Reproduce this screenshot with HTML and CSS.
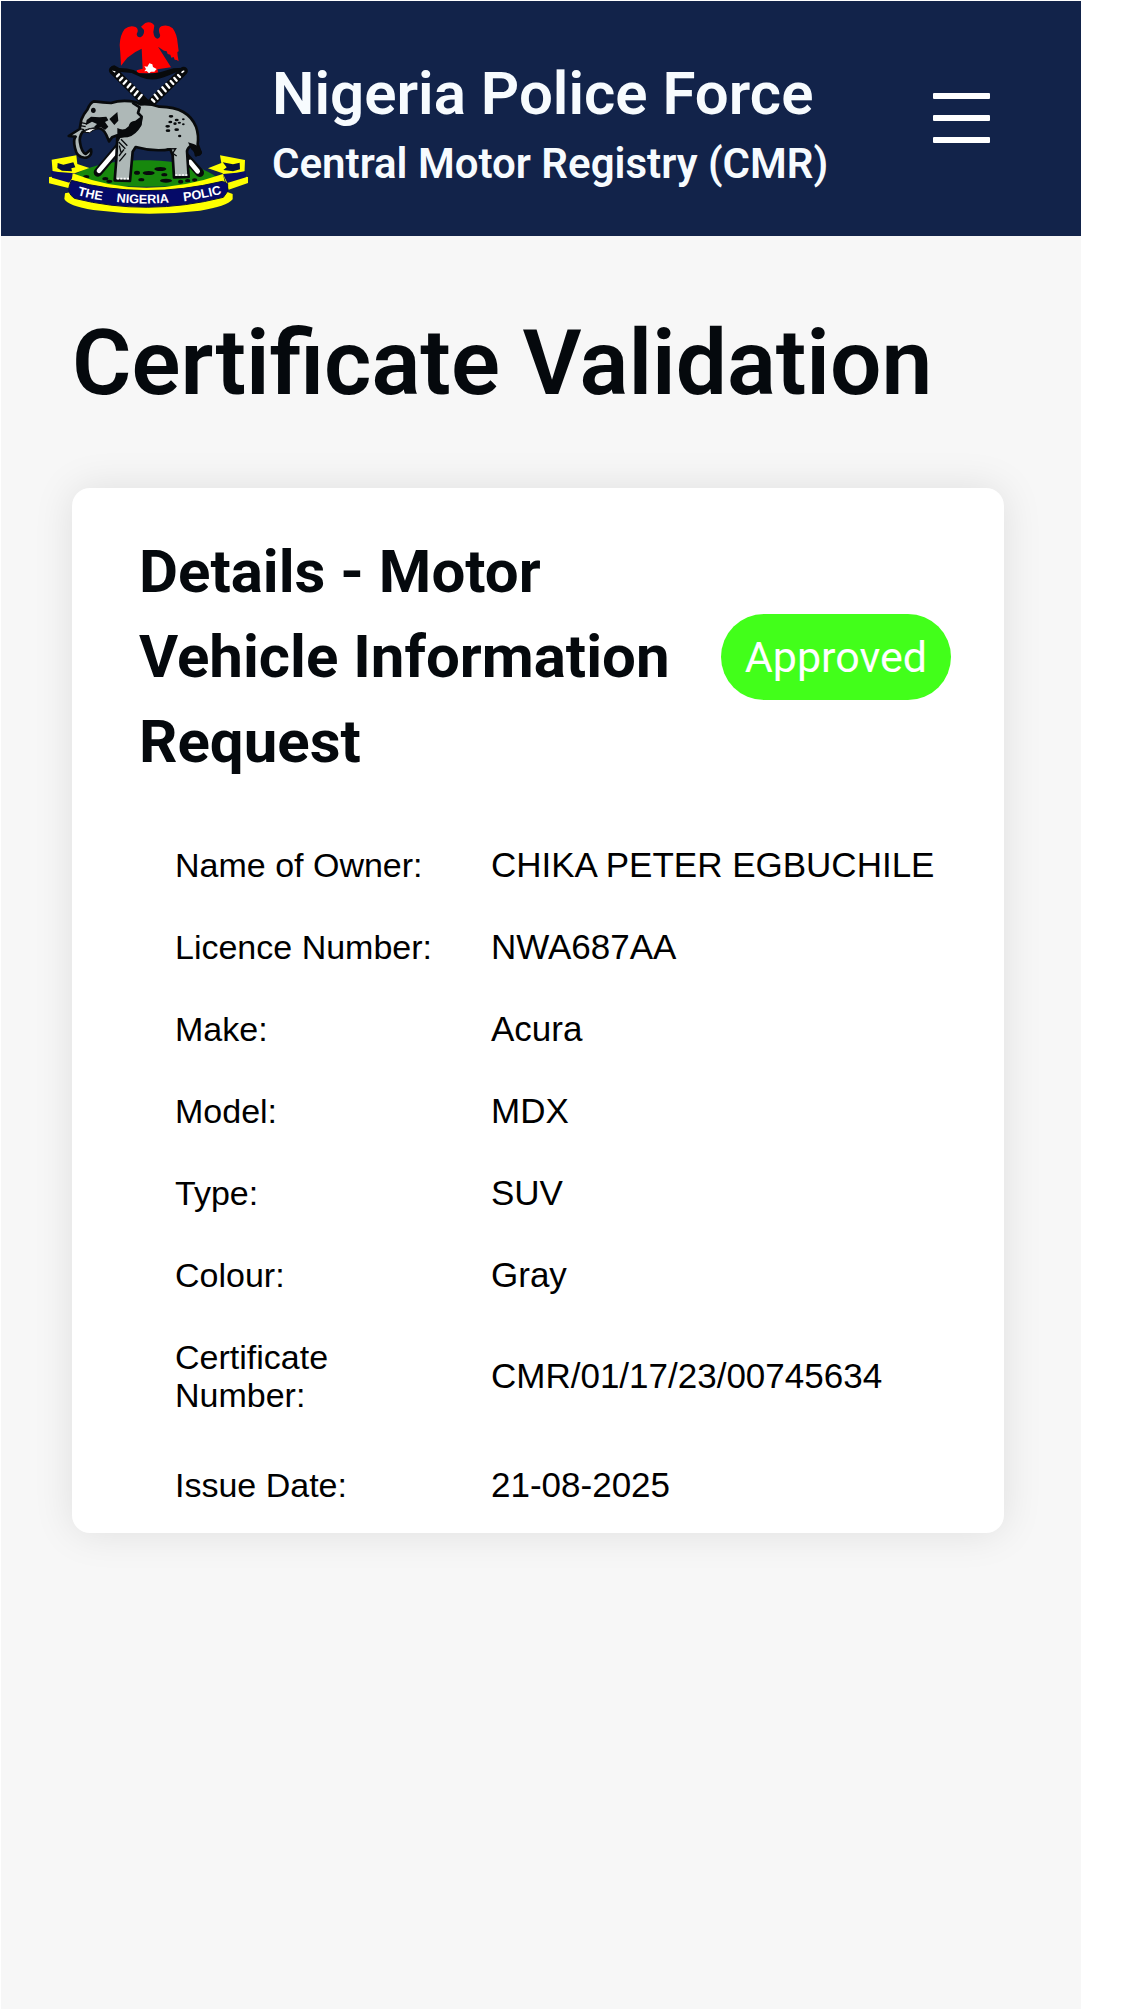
FILE: index.html
```html
<!DOCTYPE html>
<html lang="en">
<head>
  <meta charset="UTF-8">
  <meta name="viewport" content="width=device-width, initial-scale=1.0">
  <title>Certificate Validation</title>
  <link rel="stylesheet" href="styles.css">
</head>
<body>
  <div class="page">
    <header class="navbar">
      <svg class="crest" viewBox="0 0 660 660" role="img" aria-label="Crest">
        <!-- eagle -->
        <path fill="#ff0000" d="M309 45 Q316 36 326 37 Q338 38 343 47 L340 66 Q342 84 352 86 Q365 82 358 68 Q354 54 364 49 Q383 42 398 55 Q411 72 413 100 L416 124 L412 126 L413 138 L416 154 L410 150 L404 149 L401 141 L394 143 L391 134 L383 132 L380 124 L372 122 L354 110 L393 172 L352 178 L355 188 L336 190 L292 190 L290 181 L308 176 L305 116 L286 126 L262 143 L243 167 L241 130 L239 105 Q240 75 254 57 Q270 44 287 51 Q298 58 290 72 Q292 84 303 81 Q314 74 312 60 L303 50 Z"/>
        <path fill="#ffffff" d="M313 169 L322 170 L328 160 L337 163 L339 171 L350 177 L343 185 L333 185 L327 190 L320 183 L313 184 L318 177 Z"/>
        <!-- crossed staffs -->
        <g fill="none" stroke-linecap="round">
          <path stroke="#080a0c" stroke-width="25" d="M219 181 L322 284 M431 183 L328 284"/>
          <path stroke="#ffffff" stroke-width="5" d="M219 181 L224 185 M431 183 L426 187"/>
          <path stroke="#ffffff" stroke-width="7" d="M237 193 L231 199 M247 203 L240 211 M259 212 L251 221 M271 222 L263 232 M283 232 L273 244 M293 244 L284 255 M305 255 L296 266"/>
          <path stroke="#ffffff" stroke-width="7" d="M414 195 L420 201 M403 204 L410 212 M392 213 L400 222 M379 222 L388 233 M367 232 L377 244 M355 243 L365 255 M344 254 L353 266 M336 268 L343 275"/>
        </g>
        <path fill="#080a0c" d="M210 181 Q210 168 223 166 L238 174 Q262 174 281 180 L298 190 Q330 193 360 187 L400 175 L432 173 L438 181 L418 182 Q384 198 362 205 Q332 214 303 202 L275 189 L235 185 Z"/>
        <!-- green mound -->
        <path fill="#17880d" d="M94 500 C180 434 445 434 528 500 L548 519 Q315 542 92 519 Z"/>
        <path fill="none" stroke="#080a0c" stroke-width="26" stroke-linecap="round" d="M240 408 L174 487 M427 430 L479 488"/>
        <path fill="none" stroke="#ffffff" stroke-width="14" stroke-linecap="round" d="M230 420 L177 482 M450 456 L473 484"/>
        <!-- elephant -->
        <path fill="#aeb8b7" stroke="#080a0c" stroke-width="8" stroke-linejoin="round" d="M162 274 Q190 278 213 279 Q245 268 287 276 L301 283 Q330 280 358 290 Q405 291 430 306 Q456 321 468 350 Q477 377 473 403 L482 428 L468 436 Q467 422 454 407 Q443 414 441 423 L446 501 L402 502 L398 436 L391 418 Q340 426 287 411 L278 425 L270 513 L224 511 L229 447 L232 376 L216 382 L207 394 L199 375 Q190 354 171 354 Q147 357 128 365 Q117 380 120 397 Q124 426 137 432 L153 418 Q158 437 139 443 Q111 446 105 414 Q99 389 107 380 L86 378 L119 357 L124 329 Q133 309 142 299 Q150 279 162 274 Z"/>
        <path fill="none" stroke="#080a0c" stroke-width="8" stroke-linejoin="round" d="M277 278 L299 292 L294 309 L305 320 L301 343 Q283 373 238 381 L232 392"/>
        <path fill="#080a0c" d="M302 320 L307 324 L304 347 Q288 375 263 382 L232 383 L232 354 Q252 365 266 349 Q269 333 286 332 Z"/>
        <path fill="#080a0c" d="M232 306 L235 332 L223 345 L208 327 Z M140 330 L153 320 L178 322 L199 320 L205 331 L195 336 L205 350 L195 360 L182 351 L162 351 L171 342 L156 335 L137 346 Z"/>
        <ellipse fill="#080a0c" cx="160" cy="301" rx="7" ry="8"/>
        <path fill="#ffffff" stroke="#080a0c" stroke-width="3" d="M133 367 Q144 352 172 357 Q158 359 149 368 Z"/>
        <path fill="none" stroke="#080a0c" stroke-width="4" d="M123 338 L138 341 M121 347 L137 350 M119 356 L132 359 M243 388 L262 407 M236 396 L256 416 M252 418 L237 438 M238 407 L244 431 M258 430 L238 454 M380 417 L407 416 L398 430 L410 438"/>
        <path fill="#080a0c" d="M444 397 L461 402 L476 409 L486 427 Q485 438 474 438 L454 418 Z"/>
        <g fill="#080a0c">
          <ellipse cx="393" cy="319" rx="7" ry="4"/><ellipse cx="410" cy="330" rx="6" ry="4"/><ellipse cx="430" cy="328" rx="4" ry="3"/>
          <ellipse cx="391" cy="336" rx="6" ry="4"/><ellipse cx="405" cy="341" rx="5" ry="4"/><ellipse cx="418" cy="338" rx="5" ry="3"/>
          <ellipse cx="383" cy="349" rx="7" ry="4"/><ellipse cx="430" cy="343" rx="4" ry="3"/><ellipse cx="384" cy="362" rx="7" ry="4"/>
          <ellipse cx="410" cy="359" rx="7" ry="4"/><ellipse cx="419" cy="378" rx="5" ry="4"/>
          <ellipse cx="361" cy="477" rx="18" ry="6"/><ellipse cx="326" cy="489" rx="18" ry="6"/><ellipse cx="291" cy="488" rx="9" ry="6"/>
          <ellipse cx="373" cy="494" rx="9" ry="5"/><ellipse cx="304" cy="509" rx="9" ry="5"/><ellipse cx="378" cy="512" rx="18" ry="6"/>
          <ellipse cx="139" cy="500" rx="9" ry="5"/><ellipse cx="196" cy="506" rx="9" ry="5"/><ellipse cx="208" cy="514" rx="9" ry="5"/>
          <ellipse cx="422" cy="515" rx="8" ry="6"/><ellipse cx="443" cy="512" rx="8" ry="5"/><ellipse cx="464" cy="510" rx="8" ry="5"/>
        </g>
        <path stroke="#ffffff" stroke-width="5" stroke-dasharray="6 4" d="M231 506 H268 M406 495 H442"/>
        <!-- ribbon -->
        <path fill="#ffff00" d="M35 449 L109 436 L112 462 L148 474 L106 489 L88 535 L27 520 L27 501 L39 500 Z M615 450 L540 436 L544 459 L504 475 L548 490 L566 539 L624 519 L624 501 L613 500 Z"/>
        <path fill="#0a0e65" d="M33 482 L55 486 L105 490 L88 518 L36 503 Z M617 483 L590 488 L549 492 L562 519 L618 502 Z"/>
        <path fill="#07103d" d="M53 459 L70 464 L100 457 L106 472 L94 475 L96 484 L66 482 L52 474 Z M548 457 L579 463 L599 458 L600 478 L579 484 L550 480 L560 472 Z"/>
        <path fill="#ffff00" d="M98 490 Q310 576 549 492 L560 545 L578 552 L578 568 Q560 590 480 602 Q320 621 160 600 Q84 588 73 567 L75 550 L91 547 Z"/>
        <path fill="#050a68" stroke="#07103d" stroke-width="3" d="M94 511 Q310 571 547 514 L563 521 L563 544 L550 562 Q320 620 103 565 Q79 548 89 524 Z"/>
        <path id="motto" fill="none" d="M111 555 Q170 572 230 576 Q315 585 390 577 Q465 573 550 550"/>
        <text class="motto"><textPath href="#motto" startOffset="1">THE</textPath></text>
        <text class="motto"><textPath href="#motto" startOffset="120">NIGERIA</textPath></text>
        <text class="motto"><textPath href="#motto" startOffset="323">POLIC</textPath></text>
      </svg>
      <div class="brand">
        <div class="brand-name">Nigeria Police Force</div>
        <div class="brand-unit">Central Motor Registry (CMR)</div>
      </div>
      <button class="menu-btn" type="button" aria-label="Menu">
        <span></span>
        <span></span>
        <span></span>
      </button>
    </header>

    <main class="content">
      <h1>Certificate Validation</h1>
      <section class="card">
        <div class="card-head">
          <h2>Details - Motor Vehicle Information Request</h2>
          <span class="badge">Approved</span>
        </div>
        <table class="details">
          <tr><th scope="row">Name of Owner:</th><td>CHIKA PETER EGBUCHILE</td></tr>
          <tr><th scope="row">Licence Number:</th><td>NWA687AA</td></tr>
          <tr><th scope="row">Make:</th><td>Acura</td></tr>
          <tr><th scope="row">Model:</th><td>MDX</td></tr>
          <tr><th scope="row">Type:</th><td>SUV</td></tr>
          <tr><th scope="row">Colour:</th><td>Gray</td></tr>
          <tr><th scope="row">Certificate<br>Number:</th><td>CMR/01/17/23/00745634</td></tr>
          <tr class="issued"><th scope="row">Issue Date:</th><td>21-08-2025</td></tr>
        </table>
      </section>
    </main>
  </div>
</body>
</html>
```
FILE: styles.css
```css
* {
  box-sizing: border-box;
}
body {
  margin: 0;
  padding: 1px 0 0 1px;
  background-color: #fff;
  font-family: Roboto, sans-serif;
  color: #05090d;
}
.page {
  max-width: 1080px;
  min-height: calc(100vh - 1px);
  background-color: #f7f7f7;
}
.navbar {
  display: flex;
  align-items: center;
  gap: 12px;
  padding: 9px 81px 6px 39px;
  background-color: #12234a;
}
.crest {
  flex: none;
  width: 220px;
  height: 220px;
}
.motto {
  font-family: "Liberation Sans", Arial, sans-serif;
  font-size: 38px;
  font-weight: bold;
  fill: #fff;
}
.brand {
  flex: 1;
  padding-top: 12px;
  color: #f7fbfe;
  font-weight: 600;
}
.brand-name {
  font-size: 60px;
  line-height: 76px;
}
.brand-unit {
  font-size: 42px;
  line-height: 64px;
}
.menu-btn {
  display: flex;
  flex-direction: column;
  gap: 16px;
  padding: 8px 10px 12px;
  border: none;
  background: none;
  cursor: pointer;
}
.menu-btn span {
  width: 57px;
  height: 6px;
  border-radius: 1px;
  background-color: #fff;
}
.content {
  padding: 73px 77px 0 71px;
}
h1 {
  margin: 0 0 71px;
  font-size: 91px;
  line-height: 108px;
  font-weight: 600;
}
.card {
  padding: 41px 53px 29px 67px;
  border-radius: 18px;
  background-color: #fff;
  box-shadow: 0 0 40px rgba(0, 0, 0, 0.1);
}
.card-head {
  display: flex;
  align-items: center;
  gap: 40px;
  margin-bottom: 40px;
}
h2 {
  flex: 1;
  margin: 0;
  font-size: 60px;
  line-height: 85px;
  font-weight: 700;
}
.badge {
  padding: 0 24px;
  border-radius: 43px;
  background-color: #42ff1a;
  color: #fff;
  font-size: 43px;
  line-height: 86px;
}
.details {
  margin-left: 36px;
  border-collapse: collapse;
  font-family: "Liberation Sans", Arial, sans-serif;
  line-height: 38px;
  text-align: left;
  color: #000;
}
.details th,
.details td {
  padding: 22px 0;
}
.details th {
  width: 316px;
  font-size: 34px;
  font-weight: normal;
}
.details td {
  font-size: 35px;
  white-space: nowrap;
}
.details .issued th,
.details .issued td {
  padding: 30px 0 0;
}
```
